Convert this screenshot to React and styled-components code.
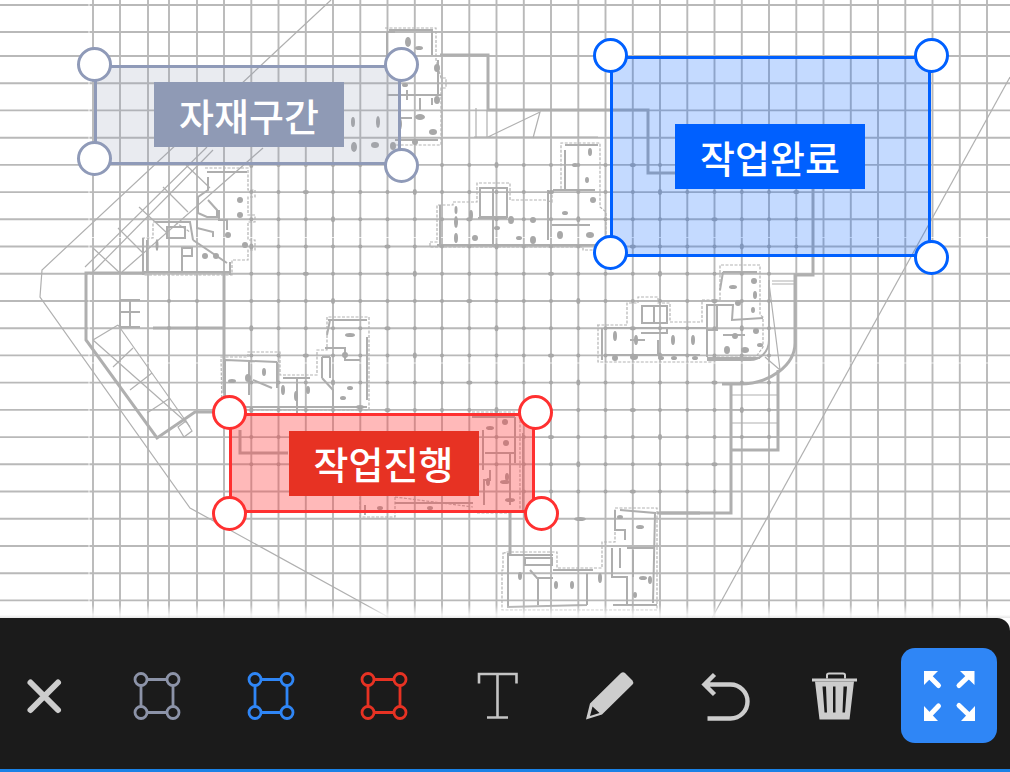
import React from 'react';
import styled, { createGlobalStyle } from 'styled-components';

const GlobalStyle = createGlobalStyle`
  html, body { margin: 0; padding: 0; background: #fff; }
  body { font-family: "Noto Sans CJK KR", "Noto Sans", sans-serif; }
`;

const Page = styled.div`
  width: 1010px;
  height: 772px;
  display: flex;
  flex-direction: column;
  overflow: hidden;
`;

const Canvas = styled.div`
  position: relative;
  flex: 0 0 618px;
  overflow: hidden;
  background: #fff;
`;

const PlanSvg = styled.svg`
  display: block;
  width: 1010px;
  height: 618px;
`;

const GridLine = styled.path`
  fill: none;
  stroke: #b9b9b9;
  stroke-width: 1.9;
`;
const Notch = styled.path`
  fill: none;
  stroke: #fff;
  stroke-width: 1.1;
  stroke-opacity: 0.75;
`;
const ThinLine = styled.path`
  fill: none;
  stroke: #b0b0b0;
  stroke-width: 1.2;
`;
const ThickWall = styled.path`
  fill: none;
  stroke: #afafaf;
  stroke-width: 3;
`;
const InnerWall = styled.path`
  fill: none;
  stroke: #aeaeae;
  stroke-width: 2;
`;
const DashedEdge = styled.path`
  fill: none;
  stroke: #b4b4b4;
  stroke-width: 1.2;
  stroke-dasharray: 3 1.5;
`;
const Column = styled.ellipse`
  fill: #a8a8a8;
`;

const Region = styled.div`
  position: absolute;
  left: ${p => p.$x}px;
  top: ${p => p.$y}px;
  width: ${p => p.$w}px;
  height: ${p => p.$h}px;
  box-sizing: border-box;
  display: flex;
  align-items: center;
  justify-content: center;
  border: 3px solid ${p => p.$line};
  background: ${p => p.$fill};
`;

const Tag = styled.div`
  width: 190px;
  height: 65px;
  margin-left: ${p => p.$shift}px;
  display: flex;
  align-items: center;
  justify-content: center;
  background: ${p => p.$bg};
  color: #fff;
  font-size: 38px;
  font-weight: 500;
  line-height: 1;
`;

const Handle = styled.span`
  position: absolute;
  left: ${p => p.$cx}px;
  top: ${p => p.$cy}px;
  width: 35px;
  height: 35px;
  margin: -17.5px 0 0 -17.5px;
  box-sizing: border-box;
  border-radius: 50%;
  background: #fff;
  border: 3px solid ${p => p.$line};
`;

const Toolbar = styled.div`
  position: relative;
  flex: 1;
  box-sizing: border-box;
  display: flex;
  align-items: center;
  padding: 30px 13px 26px 13.5px;
  background: #1b1b1b;
  border-top-right-radius: 13px;
  border-bottom: 3px solid #1a82e6;

  &::before {
    content: '';
    position: absolute;
    left: 0;
    right: 0;
    top: -13px;
    height: 13px;
    background: linear-gradient(to bottom, rgba(255,255,255,0), rgba(255,255,255,0.8) 75%, rgba(228,228,228,0.9));
  }
`;

const ToolGroup = styled.div`
  flex: 1;
  display: flex;
  align-items: center;
  gap: 53.5px;
`;

const ToolIcon = styled.svg`
  flex: 0 0 60px;
  width: 60px;
  height: 60px;
  display: block;
`;

const ExpandButton = styled.button`
  flex: 0 0 96px;
  width: 96px;
  height: 95px;
  padding: 0;
  border: 0;
  border-radius: 14px;
  background: #2f86f6;
  display: flex;
  align-items: center;
  justify-content: center;
`;

const range = (from, step, to) => {
  const out = [];
  for (let v = from; v <= to; v += step) out.push(Math.round(v * 10) / 10);
  return out;
};

const xs = range(224, 27.25, 1000);
const ys = range(56, 27.22, 612);
const gridX = [93, 120, 148, 169, 197, ...xs];
const gridY = [5, 32, ...ys];

const gridPath =
  gridX.map(x => `M${x} 0V618`).join('') + gridY.map(y => `M0 ${y}H1010`).join('');

const columns = [];
xs.forEach((x, i) => {
  ys.forEach((y, j) => {
    if (y < 160 || y > 500 || i === 0 || x > 800) return;
    if (y > 270 && x > 775) return;
    if (y > 445 && x > 720) return;
    if (y > 470 && x < 500) return;
    const h = (i * 7 + j * 3) % 9;
    columns.push({ x, y, rx: h === 0 ? 3 : 2, ry: h === 1 ? 3 : 2 });
  });
});
[169, 197].forEach(x => {
  columns.push({ x, y: 301, rx: 2, ry: 2 });
  columns.push({ x, y: 328, rx: 2, ry: 2 });
});

const thinLines = [
  'M331 0L42 270L40 297L190 508L388 617',
  'M1010 77L712 618',
  'M85 267L207 147M93 272L213 150M122 272L263 148',
  'M118 228L143 253M139 207L167 233M163 187L188 212M93 248L120 273M186 165L210 188',
  'M93 340L187 423M118 325L190 427M93 340L118 325',
  'M113 367L133 348M130 390L152 373M147 413L170 398',
  'M178 427L186 421L192 431L184 437Z',
  'M474 137H598M487 110V137M476 108V138M488 137L540 112L533 138',
  'M769 283L780 370M765 357L780 370M772 281H795M772 284H795',
  'M731 395H778M731 410H778M731 423H778M731 437H778',
];

const thickWalls = [
  'M145 273H86V340L157 438L195 412H227',
  'M224 273V393',
  'M153 328H224',
  'M240 430V453H288',
  'M440 55H488V110H648V173H675',
  'M813 189V275H795V343C795 365 770 384 740 384H722',
  'M778 370V450H731M731 384V513H660',
  'M510 512V555',
  'M657 513H700',
];

const dashedEdges = [
  'M385 28H436V60L441 78H446V88H441V145H395',
  'M205 168H248V190H255V197H248V215H255V222H248V240H255V250H248V260H232V275H143V238H153V222H175L190 232',
  'M430 242H437V205H453V202H477V183H510V200H545L552 202V190H561V143H600V207L606 212V240L597 250H583V247H430Z',
  'M597 325H627V303H638V297H658V303H670V322H702V300H720V265H760V315L763 317V347L756 357H712V362H598V325Z',
  'M503 553H505V552H557V568H602V542H615V508H657V610H502V570H503Z',
  'M221 357H248V352H280V375H317V350H327V317H369V410H222Z',
  'M472 412H515M360 497V517H395V497M395 497L473 507M477 513H510M520 420V512',
];

const innerWalls = [
  'M387 32V64M387 32H395M389 30H433M432 30V55M387 95H442M407 90V100M438 60V95M420 98V110M398 118H412M395 140H438M432 98V105',
  'M207 172H247M208 177V190L198 197V213L207 217H217V210L208 200M219 210V220H227V230M197 218V228L213 232V237M155 222H190L193 240M167 227H185V238H167ZM182 248H192V256H182ZM182 248V272M143 238V275M147 240V272M193 240L227 263M143 272H231M230 262V275',
  'M480 188H507V217H480ZM493 188V247M478 218H507M440 205V247M437 245H600M548 190V240M565 150V190M565 145H598M553 190H595M552 225H590',
  'M642 306H667V323H642ZM654 306V323M641 328H667V333H641M602 328V360M605 328H707M707 305H717V330H707ZM707 305V357M707 358H760M717 305H733L732 320L763 318M723 272H757M723 272L720 290M630 340H645M658 340V356M605 355H700M723 335H745',
  'M508 553V607M508 555H553M525 558H552V565H525ZM530 570L537 578H553M507 607L587 605M587 573V605M553 570L593 570M538 578V605M612 548V577H627V605M620 548V568M620 510L655 513L653 603M615 510V530H625V540M627 548H655M633 550V577M613 605H657',
  'M225 360L277 362M225 360V407M277 362V388M253 380L272 388M283 378H310M297 378V413M322 357V378M330 357V378M322 357H330M322 378L333 390V413M328 320H367M330 320L327 335M325 348H345V360H360M367 337V400M225 407H367M249 362V395',
  'M472 417H515M515 417V463M485 453H515M483 430V470M490 470V480H484V505M510 453V505M523 433V510M395 503H473M365 505V515',
  'M120 300H140M130 300V327M120 312H140M120 327H140M120 300V327',
  'M769 280V340C769 352 760 360 750 360H707',
];

const blobs = [
  [408,42,3,5],[419,48,4,2],[437,68,3,4],[405,85,3,2],[437,100,3,4],[420,117,5,3],[433,132,4,3],[415,142,3,3],[400,124,2,6],[378,122,2,6],[353,122,2,5],[375,145,4,3],[354,147,3,5],[393,146,3,4],
  [205,256,3,3],[216,256,3,3],[240,200,3,3],[240,215,3,3],[228,235,3,3],[245,245,3,3],[157,245,1.5,6],
  [456,210,1.5,4],[456,222,2,6],[456,238,2,5],[471,215,2,5],[475,238,3,3],[497,228,3,2],[511,220,3,4],[519,238,3,2],[533,220,3,3],[533,240,3,4],[575,165,3,2],[590,152,2,4],[587,180,2,3],[593,200,3,3],[565,213,3,2],[560,235,3,4],[590,235,4,3],
  [615,336,2,5],[636,340,2,5],[673,340,2,5],[693,340,2,5],[615,358,3,3],[634,357,4,3],[661,358,3,2],[674,358,3,2],[695,358,3,2],[733,287,4,2],[754,281,3,3],[755,295,2,4],[738,303,3,3],[753,310,2,3],[735,336,3,3],[756,331,3,3],[727,350,3,4],[745,350,4,3],[760,345,3,2],
  [520,576,2,4],[556,585,2,4],[572,585,2,4],[600,578,2,5],[620,517,3,2],[640,527,4,2],[643,578,4,2],[635,595,2,3],[650,580,2,4],[580,519,6,2],
  [232,381,4,2],[248,378,3,4],[283,390,2,5],[296,396,2,5],[308,390,2,4],[350,335,5,2],[345,355,3,3],[350,388,3,2],[343,398,3,2],[360,407,4,2],[264,372,2,4],
  [490,428,4,2],[505,422,3,3],[506,443,3,3],[507,477,2,4],[505,482,5,2],[488,482,2,4],[510,500,5,2],[430,508,3,2],[380,508,3,2],
];

const regions = [
  {
    id: 'gray', label: '자재구간', x: 94, y: 64.5, w: 307, h: 100, shift: 3,
    line: '#8f9ab8', fill: 'rgba(143,154,181,0.2)', tag: '#8f9ab5',
    handles: [[0, 0], [307, 0], [0, 94], [307, 101]],
  },
  {
    id: 'blue', label: '작업완료', x: 610, y: 56, w: 321, h: 201, shift: -1,
    line: '#0060ff', fill: 'rgba(0,96,255,0.23)', tag: '#0060ff',
    handles: [[0, -1], [321, -1], [0, 196], [321, 201]],
  },
  {
    id: 'red', label: '작업진행', x: 229, y: 413, w: 306, h: 100, shift: 3,
    line: '#ff3030', fill: 'rgba(255,60,60,0.36)', tag: '#e73223',
    handles: [[0, -1], [306, -1], [0, 100], [312, 100]],
  },
];

const FrameIcon = ({ color, cx }) => {
  const l = cx - 16;
  const r = cx + 16;
  return (
    <ToolIcon viewBox={`${cx - 30} 665.5 60 60`}>
      <g fill="none" stroke={color} strokeWidth="2.8">
        <path d={`M${l + 6} 679H${r - 6}M${l + 6} 712H${r - 6}M${l} 685V706M${r} 685V706`} />
        <circle cx={l} cy="679" r="6" />
        <circle cx={r} cy="679" r="6" />
        <circle cx={l} cy="712" r="6" />
        <circle cx={r} cy="712" r="6" />
      </g>
    </ToolIcon>
  );
};

export default function App() {
  return (
    <Page>
      <GlobalStyle />
      <Canvas>
        <PlanSvg viewBox="0 0 1010 618">
          <GridLine d={gridPath} />
          <Notch d="M0 237.5H1010M0 363H1010M89 0V618" />
          {thinLines.map(d => <ThinLine key={d} d={d} />)}
          {thickWalls.map(d => <ThickWall key={d} d={d} />)}
          {dashedEdges.map(d => <DashedEdge key={d} d={d} />)}
          {innerWalls.map(d => <InnerWall key={d} d={d} />)}
          {columns.map(c => <Column key={`${c.x}-${c.y}`} cx={c.x} cy={c.y} rx={c.rx} ry={c.ry} />)}
          {blobs.map(([x, y, rx, ry]) => <Column key={`b${x}-${y}`} cx={x} cy={y} rx={rx} ry={ry} />)}
        </PlanSvg>
        {regions.map(r => (
          <Region key={r.id} $x={r.x} $y={r.y} $w={r.w} $h={r.h} $line={r.line} $fill={r.fill}>
            <Tag $bg={r.tag} $shift={r.shift}>{r.label}</Tag>
            {r.handles.map(([cx, cy]) => (
              <Handle key={`${cx}-${cy}`} $cx={cx - 3} $cy={cy - 3} $line={r.line} />
            ))}
          </Region>
        ))}
      </Canvas>
      <Toolbar>
        <ToolGroup>
          <ToolIcon viewBox="13.5 665.5 60 60">
            <path d="M30 682L57.5 709.5M57.5 682L30 709.5" fill="none" stroke="#cdcdcd" strokeWidth="6" strokeLinecap="round" />
          </ToolIcon>
          <FrameIcon color="#8c93a8" cx={157} />
          <FrameIcon color="#2f86f6" cx={270} />
          <FrameIcon color="#e73223" cx={383} />
          <ToolIcon viewBox="467 665.5 60 60">
            <path d="M478 683V673.5H515.5V683M496.5 673.5V717M486 717H507" fill="none" stroke="#c4c4c4" strokeWidth="2.6" />
          </ToolIcon>
          <ToolIcon viewBox="581 665.5 60 60">
            <path fillRule="evenodd" fill="#cdcdcd" d="M621 672.5Q623 671 625 672.5L632.5 680Q634 682 632.5 684L602 714L586 719L590 703ZM592.5 706L590 715.5L599.5 712.5Z" />
          </ToolIcon>
          <ToolIcon viewBox="694.5 665.5 60 60">
            <path d="M714 674L704 684L714 694M704 684H730A17 17 0 0 1 730 718H707" fill="none" stroke="#cdcdcd" strokeWidth="4.4" />
          </ToolIcon>
          <ToolIcon viewBox="808 665.5 60 60">
            <path fill="none" stroke="#cdcdcd" strokeWidth="2" d="M827 678V674.5Q827 673 829 673H843Q845 673 845 674.5V678" />
            <path fill="none" stroke="#cdcdcd" strokeWidth="3" d="M812 679.5H857" />
            <path fillRule="evenodd" fill="#cdcdcd" d="M815 681H854L849.5 719H819.5ZM822.5 686L824.5 712H827L826 686ZM833 686V712H835.5V686ZM843.5 686L842.5 712H845L847 686Z" />
          </ToolIcon>
        </ToolGroup>
        <ExpandButton aria-label="expand">
          <svg width="96" height="95" viewBox="901 648 96 95">
            <g fill="#fff">
              <path d="M924 671H938L924 685Z" />
              <path d="M974.5 671H960L974.5 685Z" />
              <path d="M924 721H938L924 706Z" />
              <path d="M975 721H961L975 706Z" />
            </g>
            <path d="M928 675L938.5 685.5M970 675L959 685.5M928 717L938.5 706M971 717L959 705.5" fill="none" stroke="#fff" strokeWidth="5" strokeLinecap="round" />
          </svg>
        </ExpandButton>
      </Toolbar>
    </Page>
  );
}
